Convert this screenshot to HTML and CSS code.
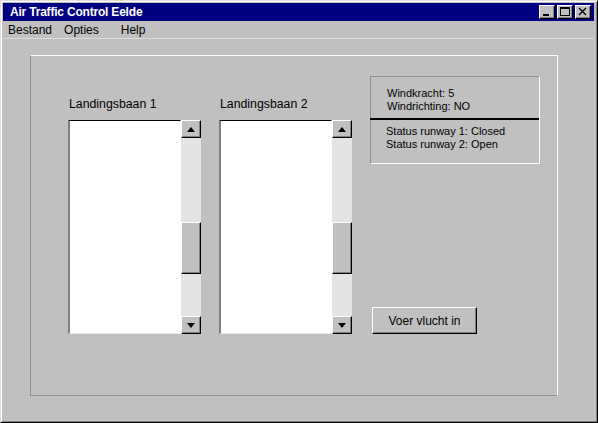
FILE: index.html
```html
<!DOCTYPE html>
<html>
<head>
<meta charset="utf-8">
<title>Air Traffic Control Eelde</title>
<link rel="stylesheet" href="styles.css">
</head>
<body>
<div class="window">
  <div class="titlebar">
    <span class="title">Air Traffic Control Eelde</span>
    <div class="caption-buttons">
      <div class="cbtn"><svg width="14" height="12" viewBox="0 0 14 12"><rect x="3" y="8" width="6" height="2" fill="#000"/></svg></div>
      <div class="cbtn"><svg width="14" height="12" viewBox="0 0 14 12"><rect x="2.5" y="1.5" width="9" height="8" fill="none" stroke="#000"/><rect x="2" y="1" width="10" height="2" fill="#000"/></svg></div>
      <div class="cbtn close"><svg width="14" height="12" viewBox="0 0 14 12"><path d="M3 2 L10 9 M10 2 L3 9" stroke="#000" stroke-width="1.4"/></svg></div>
    </div>
  </div>
  <div class="menubar">
    <span class="menu m1">Bestand</span>
    <span class="menu m2">Opties</span>
    <span class="menu">Help</span>
  </div>
  <div class="content">
    <div class="panel">
      <div class="col">
        <div class="label">Landingsbaan 1</div>
        <div class="list">
          <div class="lbox"></div>
          <div class="sbar">
            <div class="sbtn"><span class="tri up"></span></div>
            <div class="track t1"></div>
            <div class="thumb"></div>
            <div class="track t2"></div>
            <div class="sbtn"><span class="tri down"></span></div>
          </div>
        </div>
      </div>
      <div class="col">
        <div class="label">Landingsbaan 2</div>
        <div class="list">
          <div class="lbox"></div>
          <div class="sbar">
            <div class="sbtn"><span class="tri up"></span></div>
            <div class="track t1"></div>
            <div class="thumb"></div>
            <div class="track t2"></div>
            <div class="sbtn"><span class="tri down"></span></div>
          </div>
        </div>
      </div>
      <div class="right">
        <div class="status">
          <div class="wind">
            <div>Windkracht: 5</div>
            <div>Windrichting: NO</div>
          </div>
          <div class="divider"></div>
          <div class="runways">
            <div>Status runway 1: Closed</div>
            <div>Status runway 2: Open</div>
          </div>
        </div>
        <div class="btn">Voer vlucht in</div>
      </div>
    </div>
  </div>
</div>
</body>
</html>
```

FILE: styles.css
```css
html, body {
  margin: 0;
  padding: 0;
  background: #c0c0c0;
}
body {
  font-family: "Liberation Sans", Arial, sans-serif;
  color: #000;
}
.window {
  width: 598px;
  height: 423px;
  box-sizing: border-box;
  background: #c0c0c0;
  border: 1px solid;
  border-color: #dfdfdf #000 #000 #dfdfdf;
  box-shadow: inset 1px 1px #fff, inset -1px -1px #808080;
  padding: 2px 3px 2px 2px;
  display: flex;
  flex-direction: column;
}
.titlebar {
  height: 18px;
  background: #000080;
  display: flex;
  align-items: center;
  justify-content: space-between;
  padding: 0 3px 0 7px;
}
.title {
  color: #fff;
  font-weight: bold;
  font-size: 12px;
  letter-spacing: -0.2px;
}
.caption-buttons {
  display: flex;
  gap: 2px;
}
.cbtn {
  width: 16px;
  height: 14px;
  box-sizing: border-box;
  background: #c0c0c0;
  border: 1px solid;
  border-color: #fff #000 #000 #fff;
  box-shadow: inset -1px -1px #808080;
  display: flex;
  align-items: center;
  justify-content: center;
}
.cbtn svg {
  display: block;
}
.menubar {
  height: 17px;
  display: flex;
  align-items: center;
  padding-left: 5px;
  font-size: 12px;
  border-bottom: 1px solid #dcdcdc;
}
.m1 { margin-right: 12px; }
.m2 { margin-right: 22px; }
.content {
  flex: 1;
  padding: 16px 0 0 27px;
}
.panel {
  width: 528px;
  height: 341px;
  box-sizing: border-box;
  border: 1px solid;
  border-color: #fff #fff #909090 #909090;
  padding: 20px 0 0 37px;
  display: flex;
  align-items: flex-start;
}
.col {
  width: 133px;
  margin-right: 18px;
  margin-top: 20px;
}
.label {
  font-size: 12.3px;
  line-height: 16px;
  height: 16px;
  margin-bottom: 8px;
  padding-left: 1px;
}
.list {
  display: flex;
  height: 214px;
}
.lbox {
  flex: 1;
  background: #fff;
  border-top: 1px solid #000;
  border-left: 2px solid #808080;
  border-bottom: 1px solid #e8e8e8;
  border-right: 1px solid #fff;
}
.sbar {
  width: 20px;
  display: flex;
  flex-direction: column;
  background: #e4e4e4;
}
.sbtn, .thumb {
  box-sizing: border-box;
  background: #c0c0c0;
  border: 1px solid;
  border-color: #fff #000 #000 #fff;
  box-shadow: inset -1px -1px #808080;
}
.sbtn {
  height: 18px;
  display: flex;
  align-items: center;
  justify-content: center;
}
.thumb {
  height: 52px;
}
.t1 { height: 84px; }
.t2 { flex: 1; }
.tri {
  width: 0;
  height: 0;
  border-left: 4px solid transparent;
  border-right: 4px solid transparent;
}
.tri.up { border-bottom: 5px solid #000; }
.tri.down { border-top: 5px solid #000; }
.right {
  width: 170px;
  display: flex;
  flex-direction: column;
  align-items: flex-start;
}
.status {
  width: 170px;
  height: 88px;
  box-sizing: border-box;
  border: 1px solid;
  border-color: #909090 #fff #fff #909090;
  font-size: 11px;
  line-height: 13px;
}
.wind {
  padding: 10px 0 0 16px;
  height: 31px;
}
.divider {
  height: 2px;
  background: #000;
  margin-left: -1px;
}
.runways {
  padding: 5px 0 0 15px;
}
.btn {
  margin-top: 143px;
  margin-left: 2px;
  width: 105px;
  height: 27px;
  box-sizing: border-box;
  border: 1px solid;
  border-color: #fff #000 #000 #fff;
  box-shadow: inset -1px -1px #808080;
  font-size: 12px;
  display: flex;
  align-items: center;
  justify-content: center;
}
```
